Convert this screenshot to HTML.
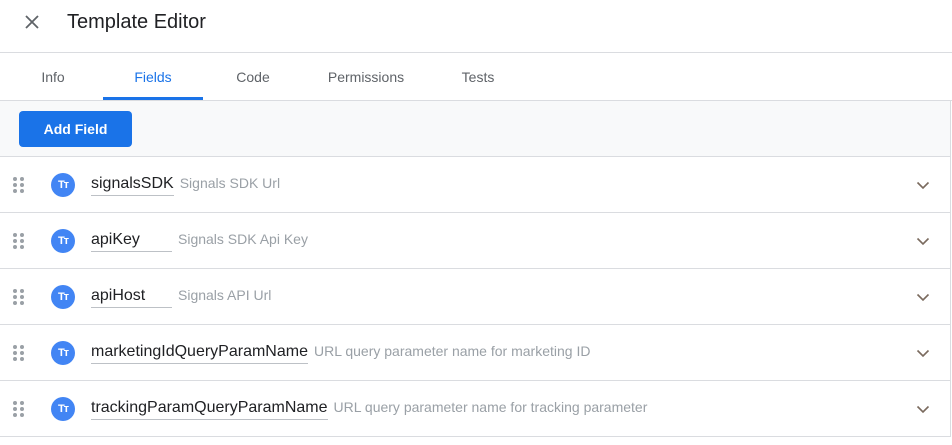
<!DOCTYPE html>
<html><head><style>
body{margin:0;width:952px;height:445px;overflow:hidden;background:#fff;font-family:"Liberation Sans",Arial,sans-serif;position:relative}
.hdr{position:absolute;left:0;top:0;width:952px;height:52px;border-bottom:1px solid #dadce0}
.title{position:absolute;left:67px;top:11px;font-size:20px;color:#202124}
.tabs{position:absolute;top:53px;left:0;width:952px;height:47px;border-bottom:1px solid #dadce0}
.tab{position:absolute;top:1px;height:47px;line-height:47px;font-size:14px;color:#5f6368;text-align:center;width:100px}
.tab.on{color:#1a73e8;border-bottom:3px solid #1a73e8;height:44px;top:0;line-height:48px}
.bar{position:absolute;top:101px;left:0;width:950px;height:55px;background:#f8f9fa;border-bottom:1px solid #dadce0;border-right:1px solid #dadce0}
.btn{position:absolute;left:19px;top:10px;width:113px;height:36px;background:#1a73e8;border-radius:4px;color:#fff;font-weight:bold;font-size:14px;line-height:36px;text-align:center}
.row{position:absolute;left:0;width:950px;height:55px;border-bottom:1px solid #dadce0;border-right:1px solid #dadce0}
.grip{position:absolute;left:13px;top:20px;width:12px;height:16px}
.grip i{position:absolute;width:4px;height:4px;border-radius:2px;background:#9aa0a6}
.ic{position:absolute;left:51px;top:16px;width:24px;height:24px;border-radius:12px;background:#4285f4;color:#fff;font-size:11px;font-weight:bold;text-align:center;line-height:24px;letter-spacing:-1px}
.ln{position:absolute;left:91px;top:16px;white-space:nowrap;line-height:21px}
.nm{display:inline-block;font-size:16px;color:#202124;border-bottom:1px solid #bdc1c6;padding-bottom:1px;vertical-align:baseline}
.ds{font-size:14px;color:#9aa0a6;margin-left:6px}
.chev{position:absolute;left:916px;top:24px}
</style></head><body>
<div class="hdr">
<svg style="position:absolute;left:24px;top:14px" width="16" height="16" viewBox="0 0 16 16"><path d="M2 2L14 14M14 2L2 14" stroke="#5f6368" stroke-width="1.8"/></svg>
<div class="title">Template Editor</div></div>
<div class="tabs">
<div class="tab" style="left:3px">Info</div>
<div class="tab on" style="left:103px">Fields</div>
<div class="tab" style="left:203px">Code</div>
<div class="tab" style="left:316px;width:100px">Permissions</div>
<div class="tab" style="left:428px">Tests</div>
</div>
<div class="bar"><div class="btn">Add Field</div></div>

<div class="row" style="top:157px"><div class="grip"><i style="left:0;top:0"></i><i style="left:7px;top:0"></i><i style="left:0;top:6px"></i><i style="left:7px;top:6px"></i><i style="left:0;top:12px"></i><i style="left:7px;top:12px"></i></div><div class="ic">Tт</div><div class="ln"><span class="nm" style="min-width:80px">signalsSDK</span><span class="ds">Signals SDK Url</span></div><svg class="chev" width="14" height="9" viewBox="0 0 14 9"><path d="M1.5 1.5L7 7L12.5 1.5" fill="none" stroke="#7a6a5e" stroke-width="1.6"/></svg></div>

<div class="row" style="top:213px"><div class="grip"><i style="left:0;top:0"></i><i style="left:7px;top:0"></i><i style="left:0;top:6px"></i><i style="left:7px;top:6px"></i><i style="left:0;top:12px"></i><i style="left:7px;top:12px"></i></div><div class="ic">Tт</div><div class="ln"><span class="nm" style="width:81px">apiKey</span><span class="ds">Signals SDK Api Key</span></div><svg class="chev" width="14" height="9" viewBox="0 0 14 9"><path d="M1.5 1.5L7 7L12.5 1.5" fill="none" stroke="#7a6a5e" stroke-width="1.6"/></svg></div>

<div class="row" style="top:269px"><div class="grip"><i style="left:0;top:0"></i><i style="left:7px;top:0"></i><i style="left:0;top:6px"></i><i style="left:7px;top:6px"></i><i style="left:0;top:12px"></i><i style="left:7px;top:12px"></i></div><div class="ic">Tт</div><div class="ln"><span class="nm" style="width:81px">apiHost</span><span class="ds">Signals API Url</span></div><svg class="chev" width="14" height="9" viewBox="0 0 14 9"><path d="M1.5 1.5L7 7L12.5 1.5" fill="none" stroke="#7a6a5e" stroke-width="1.6"/></svg></div>

<div class="row" style="top:325px"><div class="grip"><i style="left:0;top:0"></i><i style="left:7px;top:0"></i><i style="left:0;top:6px"></i><i style="left:7px;top:6px"></i><i style="left:0;top:12px"></i><i style="left:7px;top:12px"></i></div><div class="ic">Tт</div><div class="ln"><span class="nm">marketingIdQueryParamName</span><span class="ds">URL query parameter name for marketing ID</span></div><svg class="chev" width="14" height="9" viewBox="0 0 14 9"><path d="M1.5 1.5L7 7L12.5 1.5" fill="none" stroke="#7a6a5e" stroke-width="1.6"/></svg></div>

<div class="row" style="top:381px"><div class="grip"><i style="left:0;top:0"></i><i style="left:7px;top:0"></i><i style="left:0;top:6px"></i><i style="left:7px;top:6px"></i><i style="left:0;top:12px"></i><i style="left:7px;top:12px"></i></div><div class="ic">Tт</div><div class="ln"><span class="nm">trackingParamQueryParamName</span><span class="ds">URL query parameter name for tracking parameter</span></div><svg class="chev" width="14" height="9" viewBox="0 0 14 9"><path d="M1.5 1.5L7 7L12.5 1.5" fill="none" stroke="#7a6a5e" stroke-width="1.6"/></svg></div>
</body></html>
